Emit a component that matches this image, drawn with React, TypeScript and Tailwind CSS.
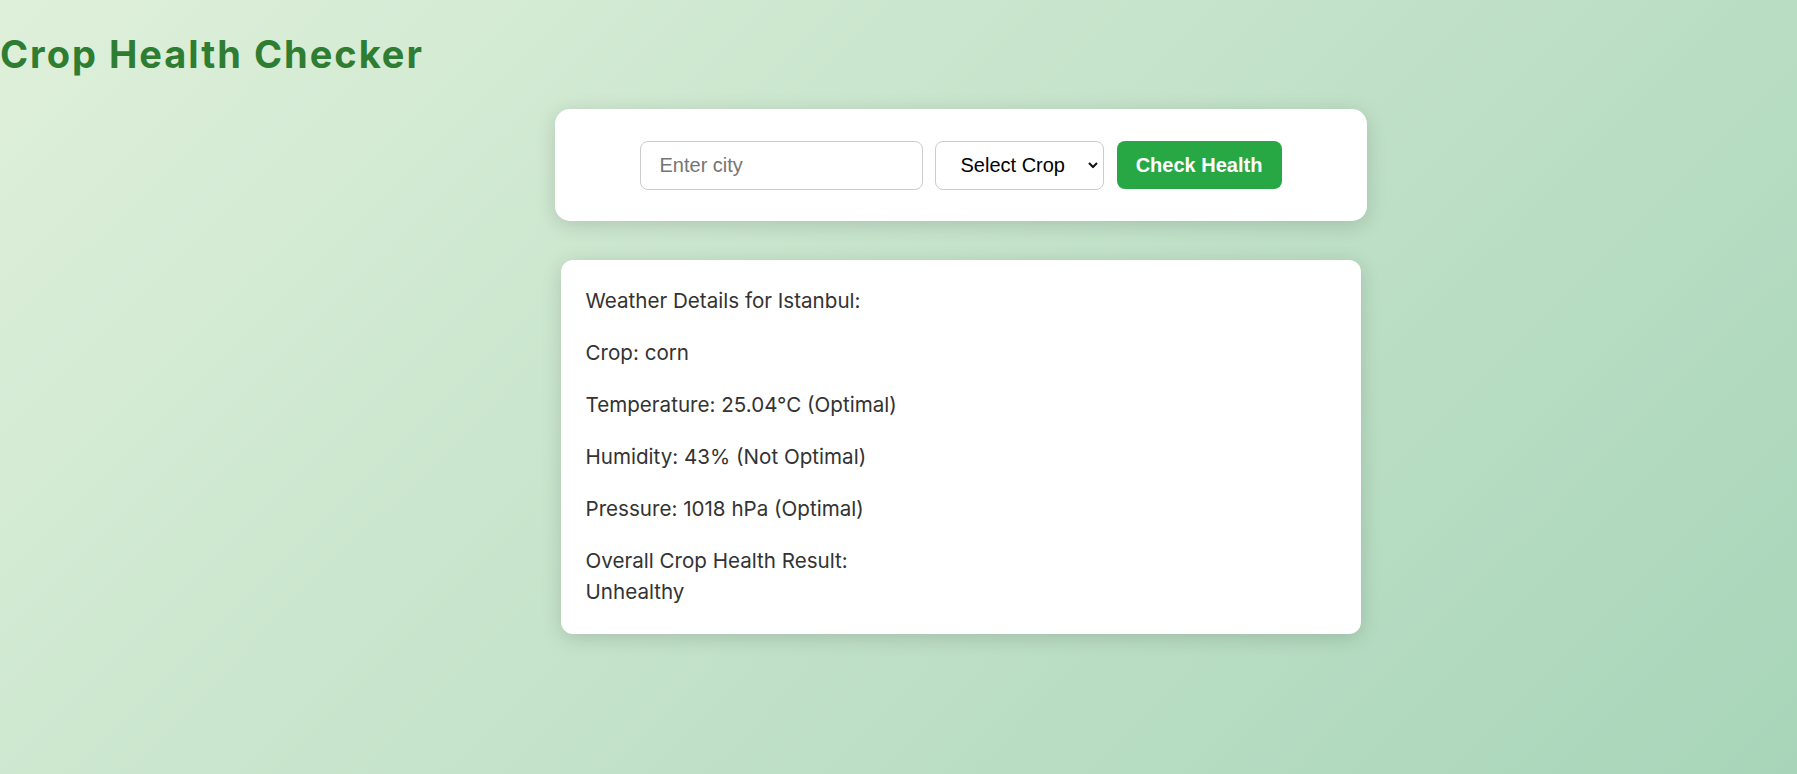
import React from "react";

export default function App() {
  const lines = [
    "Weather Details for Istanbul:",
    "Crop: corn",
    "Temperature: 25.04°C (Optimal)",
    "Humidity: 43% (Not Optimal)",
    "Pressure: 1018 hPa (Optimal)",
  ];
  return (
    <div className="min-h-[774px] w-full bg-[linear-gradient(135deg,#dff0da_0%,#a8d5b9_100%)] font-['Inter',sans-serif] overflow-hidden">
      <h1 className="pt-[32px] m-0 text-[38px] leading-[44px] font-bold text-[#2e7d32] tracking-[2px]">
        Crop Health Checker
      </h1>
      <div className="mt-[33px] pl-[124px] flex flex-col items-center">
        <div className="w-[812px] h-[112px] bg-white rounded-[15px] shadow-[0_4px_20px_rgba(0,0,0,0.15)] flex items-center justify-center">
          <input
            type="text"
            placeholder="Enter city"
            className="w-[283px] h-[49px] border border-[#cccccc] rounded-[8px] px-[19px] text-[20px] font-['Liberation_Sans',Arial,sans-serif] placeholder:text-[#757575] outline-none bg-white"
          />
          <div className="relative ml-[12px]">
            <select
              defaultValue=""
              className="appearance-none w-[169px] h-[49px] border border-[#cccccc] rounded-[8px] pl-[25px] pr-[20px] text-[20px] text-black font-['Liberation_Sans',Arial,sans-serif] bg-white outline-none"
            >
              <option value="">Select Crop</option>
              <option value="corn">Corn</option>
              <option value="wheat">Wheat</option>
              <option value="rice">Rice</option>
            </select>
            <svg
              className="absolute right-[6px] top-1/2 -translate-y-1/2 pointer-events-none"
              width="10"
              height="7"
              viewBox="0 0 10 7"
            >
              <path d="M1 1.5 L5 5.5 L9 1.5" fill="none" stroke="#111" strokeWidth="2" />
            </svg>
          </div>
          <button className="ml-[13px] w-[165px] h-[48px] bg-[#28a745] text-white rounded-[8px] text-[20px] font-bold font-['Liberation_Sans',Arial,sans-serif]">
            Check Health
          </button>
        </div>
        <div className="mt-[39px] w-[800px] bg-white rounded-[12px] shadow-[0_4px_20px_rgba(0,0,0,0.15)] px-[25px] pt-[25px] pb-[27px] text-[#333333] text-[20.6px] leading-[31.2px]">
          {lines.map((l) => (
            <p key={l} className="mb-[20.8px]">
              {l}
            </p>
          ))}
          <p>
            Overall Crop Health Result:
            <br />
            Unhealthy
          </p>
        </div>
      </div>
    </div>
  );
}
